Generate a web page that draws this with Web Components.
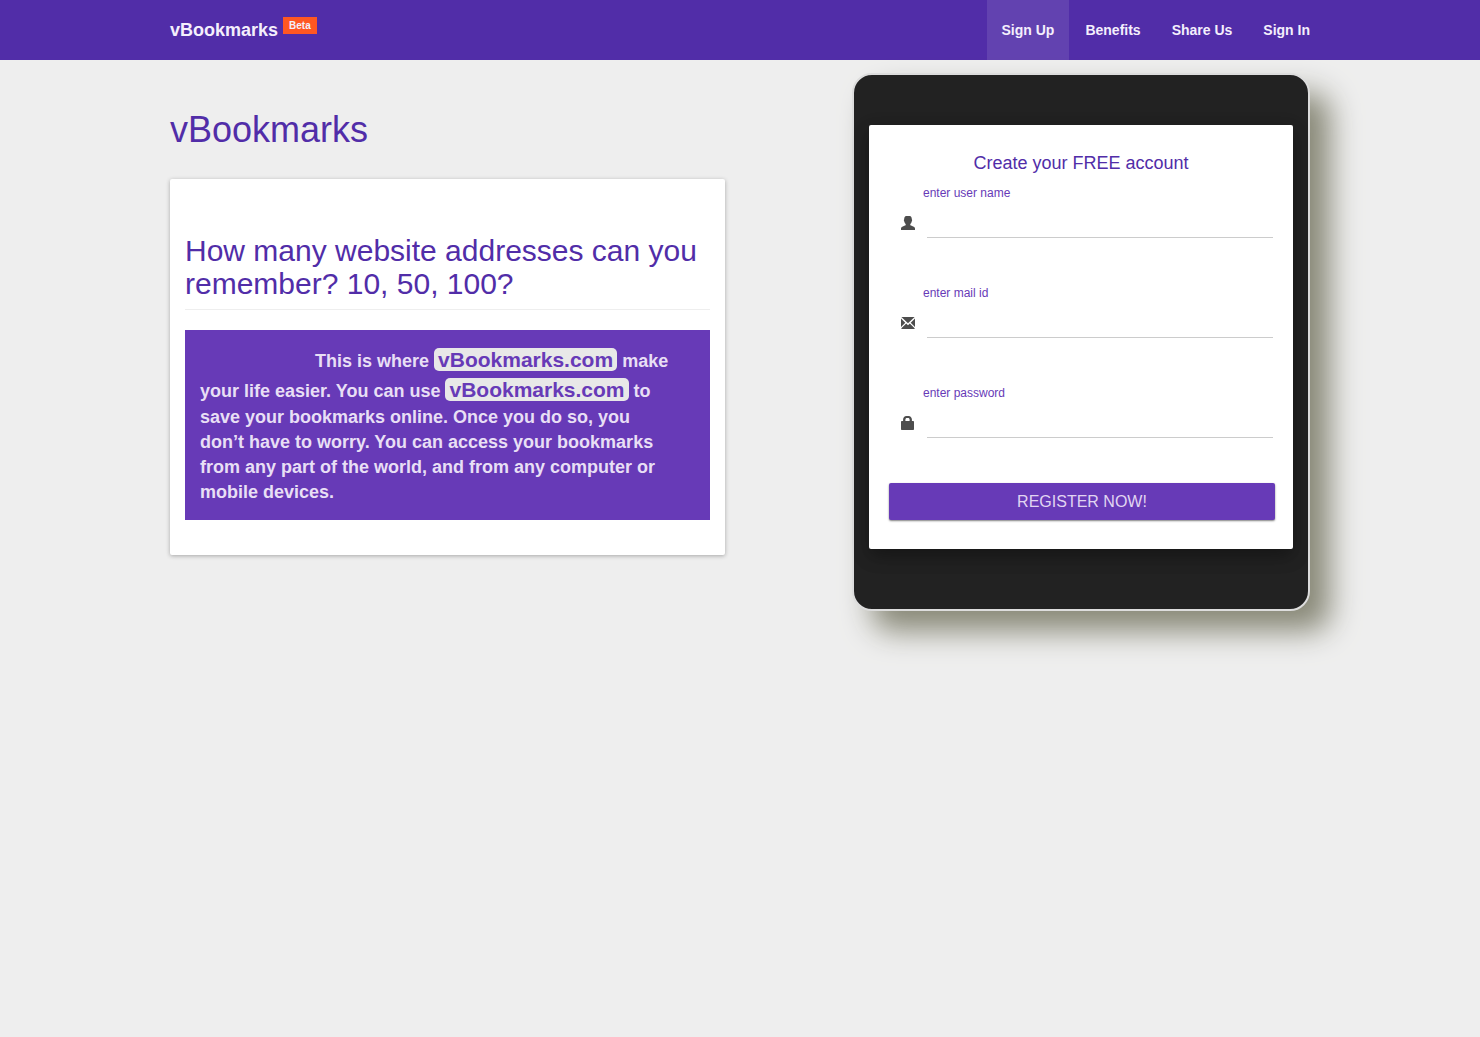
<!DOCTYPE html>
<html lang="en">
<head>
  <meta charset="utf-8">
  <meta name="viewport" content="width=device-width, initial-scale=1">
  <title>vBookmarks</title>
  <style>
    body {
      margin: 0;
      background: #eee;
      color: #512da8;
      font: 14px/20px "Liberation Sans", Arial, sans-serif;
      --deep: #512da8;
      --purple: #673ab7;
      --light: #f4effc;
    }
  </style>

  <template id="navBar.tpl">
    <style>
      :host {
        display: block;
        background: var(--deep);
      }
      nav {
        display: flex;
        flex-wrap: wrap;
        justify-content: space-between;
        max-width: 1170px;
        margin: 0 auto;
      }
      .links {
        display: flex;
        flex-wrap: wrap;
        gap: 1px;
      }
    </style>
    <nav>
      <slot name="brand"></slot>
      <div class="links"><slot></slot></div>
    </nav>
  </template>

  <template id="navBrand.tpl">
    <style>
      :host { display: block; }
      a {
        display: flex;
        align-items: flex-start;
        gap: 5px;
        padding: 17px 15px 0;
        color: var(--light);
        font-size: 18px;
        line-height: 26px;
        font-weight: bold;
        text-decoration: none;
      }
      .badge {
        padding: 0 6px;
        background: #ff5722;
        font-size: 10px;
        line-height: 17px;
      }
    </style>
    <a href="#"><slot></slot><span class="badge"></span></a>
  </template>

  <template id="navLink.tpl">
    <style>
      :host { display: block; }
      a {
        display: block;
        padding: 20px 15px;
        color: var(--light);
        font-weight: bold;
        text-decoration: none;
      }
      :host([active]) a, a:hover { background: rgba(255, 255, 255, .1); }
    </style>
    <a><slot></slot></a>
  </template>

  <template id="landingPage.tpl">
    <style>
      :host {
        display: grid;
        grid-template-columns: minmax(0, 555fr) minmax(0, 458fr);
        column-gap: 127px;
        align-items: start;
        max-width: 1140px;
        margin: 0 auto;
        padding: 0 15px 60px;
      }
      .side { padding-top: 13px; }
      @media (max-width: 991px) {
        :host { grid-template-columns: minmax(0, 1fr); }
      }
    </style>
    <div class="intro"><slot></slot></div>
    <div class="side"><slot name="side"></slot></div>
  </template>

  <template id="introCard.tpl">
    <style>
      :host { display: block; }
      h1 {
        margin: 50px 0 29px;
        font-size: 36px;
        line-height: 40px;
        font-weight: normal;
      }
      section {
        padding: 55px 15px 35px;
        background: #fff;
        border-radius: 2px;
        box-shadow: 0 1px 4px rgba(0, 0, 0, .3);
      }
      h2 {
        margin: 0 0 20px;
        padding-bottom: 9px;
        border-bottom: 1px solid #eee;
        font-size: 30px;
        line-height: 33px;
        font-weight: normal;
      }
      p {
        margin: 0;
        padding: 15px 40px 15px 15px;
        background: var(--purple);
        color: #e8dff5;
        font-size: 18px;
        line-height: 25px;
        font-weight: bold;
        text-indent: 115px;
      }
    </style>
    <h1><slot name="title"></slot></h1>
    <section>
      <h2><slot name="question"></slot></h2>
      <p><slot></slot></p>
    </section>
  </template>

  <template id="siteName.tpl"><style>
      :host {
        padding: 0 4px;
        border-radius: 5px;
        background: #e8e8e8;
        color: var(--purple);
        font-size: 21px;
        line-height: 30px;
      }
    </style><slot></slot></template>

  <template id="tabletFrame.tpl">
    <style>
      :host {
        display: block;
        padding: 50px 15px 60px;
        background: #222;
        border: 2px solid #ddd;
        border-radius: 20px;
        box-shadow: 20px 20px 30px #887;
      }
      .screen {
        background: #fff;
        border-radius: 2px;
        box-shadow: 0 8px 17px rgba(0, 0, 0, .2), 0 6px 20px rgba(0, 0, 0, .19);
      }
    </style>
    <div class="screen"><slot></slot></div>
  </template>

  <template id="signupForm.tpl">
    <style>
      :host { display: block; }
      form { padding: 28px 0 29px; }
      h3 {
        margin: 0 0 12px;
        font-size: 18px;
        line-height: 20px;
        font-weight: normal;
        text-align: center;
      }
      .body { padding: 0 18px 0 20px; }
      .fields {
        display: flex;
        flex-direction: column;
        gap: 47px;
        margin-bottom: 45px;
      }
      button {
        display: block;
        width: 100%;
        padding: 8px 12px;
        border: 0;
        border-radius: 2px;
        background: var(--purple);
        box-shadow: 0 1px 2px rgba(0, 0, 0, .5);
        color: #e1d5f2;
        font: 16px/21px "Liberation Sans", Arial, sans-serif;
        text-transform: uppercase;
        cursor: pointer;
      }
    </style>
    <form>
      <h3><slot name="title"></slot></h3>
      <div class="body">
        <div class="fields">
          <icon-field icon="user" type="text" label="enter user name"></icon-field>
          <icon-field icon="mail" type="email" label="enter mail id"></icon-field>
          <icon-field icon="lock" type="password" label="enter password"></icon-field>
        </div>
        <button type="submit">Register Now!</button>
      </div>
    </form>
  </template>

  <template id="iconField.tpl">
    <style>
      :host { display: block; }
      label {
        display: block;
        padding-left: 34px;
        margin-bottom: 3px;
        color: var(--purple);
        font-size: 12px;
        line-height: 16px;
      }
      .row {
        display: flex;
        align-items: center;
        gap: 12px;
        padding: 0 2px 0 12px;
      }
      svg {
        flex: none;
        width: 14px;
        height: 14px;
        margin-top: 4px;
        fill: #4d4d4d;
      }
      input {
        flex: 1;
        min-width: 0;
        box-sizing: border-box;
        height: 34px;
        padding: 0;
        border: 0;
        border-bottom: 1px solid #ccc;
        background: none;
        font: 16px "Liberation Sans", Arial, sans-serif;
        outline: none;
      }
      input:focus { border-color: var(--purple); }
    </style>
    <label for="field"></label>
    <div class="row">
      <svg viewBox="0 0 14 14" aria-hidden="true"><path fill-rule="evenodd"/></svg>
      <input id="field">
    </div>
  </template>
</head>

<body>
  <nav-bar>
    <nav-brand slot="brand" badge="Beta">vBookmarks</nav-brand>
    <nav-link href="#signup" active>Sign Up</nav-link>
    <nav-link href="#benefits">Benefits</nav-link>
    <nav-link href="#share">Share Us</nav-link>
    <nav-link href="#signin">Sign In</nav-link>
  </nav-bar>

  <landing-page>
    <intro-card>
      <span slot="title">vBookmarks</span>
      <span slot="question">How many website addresses can you remember? 10, 50, 100?</span>
      This is where <site-name>vBookmarks.com</site-name> make your life easier.
      You can use <site-name>vBookmarks.com</site-name> to save your bookmarks online.
      Once you do so, you don’t have to worry. You can access your bookmarks from any
      part of the world, and from any computer or mobile devices.
    </intro-card>
    <tablet-frame slot="side">
      <signup-form>
        <span slot="title">Create your FREE account</span>
      </signup-form>
    </tablet-frame>
  </landing-page>

  <script>
    const ICONS = {
      user: "M5.2 0H8.8C10 .3 10.9 1.4 10.8 3.2C11.3 3.6 11.2 4.9 10.7 5.4C10.5 6.6 10 7.4 9.3 8V9.3C10 9.7 12 10.4 13.2 11.1C13.8 11.5 14 12 14 12.6V14H0V12.6C0 12 .2 11.5 .8 11.1C2 10.4 4 9.7 4.7 9.3V8C4 7.4 3.5 6.6 3.3 5.4C2.8 4.9 2.7 3.6 3.2 3.2C3.1 1.4 4 .3 5.2 0Z",
      mail: "M.4 1H13.6L7 7.3ZM0 2.5L4.3 6.7L0 11ZM14 2.5V11L9.7 6.7ZM5.2 7.5L7 9.2L8.8 7.5L13.6 12.2V13H.4V12.2Z",
      lock: "M2.1 5V3.3C2.3 1.3 3.5 0 5.3 0H7.7C9.5 0 10.7 1.3 10.9 3.3V5H12C12.6 5 13 5.4 13 6V13C13 13.6 12.6 14 12 14H1C.4 14 0 13.6 0 13V6C0 5.4 .4 5 1 5ZM4.4 5H8.6V3.5C8.6 2.6 8 2 7.1 2H5.9C5 2 4.4 2.6 4.4 3.5Z"
    };

    class BaseView extends HTMLElement {
      constructor() {
        super();
        const shadow = this.attachShadow({ mode: 'open' });
        shadow.appendChild(document.getElementById(this.constructor.tpl).content.cloneNode(true));
      }
    }

    class NavBar extends BaseView { static tpl = "navBar.tpl"; }
    class LandingPage extends BaseView { static tpl = "landingPage.tpl"; }
    class IntroCard extends BaseView { static tpl = "introCard.tpl"; }
    class SiteName extends BaseView { static tpl = "siteName.tpl"; }
    class TabletFrame extends BaseView { static tpl = "tabletFrame.tpl"; }

    class NavBrand extends BaseView {
      static tpl = "navBrand.tpl";
      connectedCallback() {
        this.shadowRoot.querySelector('.badge').textContent = this.getAttribute('badge');
      }
    }

    class NavLink extends BaseView {
      static tpl = "navLink.tpl";
      connectedCallback() {
        this.shadowRoot.querySelector('a').href = this.getAttribute('href');
      }
    }

    class IconField extends BaseView {
      static tpl = "iconField.tpl";
      connectedCallback() {
        this.shadowRoot.querySelector('label').textContent = this.getAttribute('label');
        this.shadowRoot.querySelector('input').type = this.getAttribute('type');
        this.shadowRoot.querySelector('path').setAttribute('d', ICONS[this.getAttribute('icon')]);
      }
    }

    class SignupForm extends BaseView {
      static tpl = "signupForm.tpl";
      connectedCallback() {
        this.shadowRoot.querySelector('form').addEventListener('submit', e => e.preventDefault());
      }
    }

    window.customElements.define('nav-bar', NavBar);
    window.customElements.define('nav-brand', NavBrand);
    window.customElements.define('nav-link', NavLink);
    window.customElements.define('landing-page', LandingPage);
    window.customElements.define('intro-card', IntroCard);
    window.customElements.define('site-name', SiteName);
    window.customElements.define('tablet-frame', TabletFrame);
    window.customElements.define('icon-field', IconField);
    window.customElements.define('signup-form', SignupForm);
  </script>
</body>

</html>
